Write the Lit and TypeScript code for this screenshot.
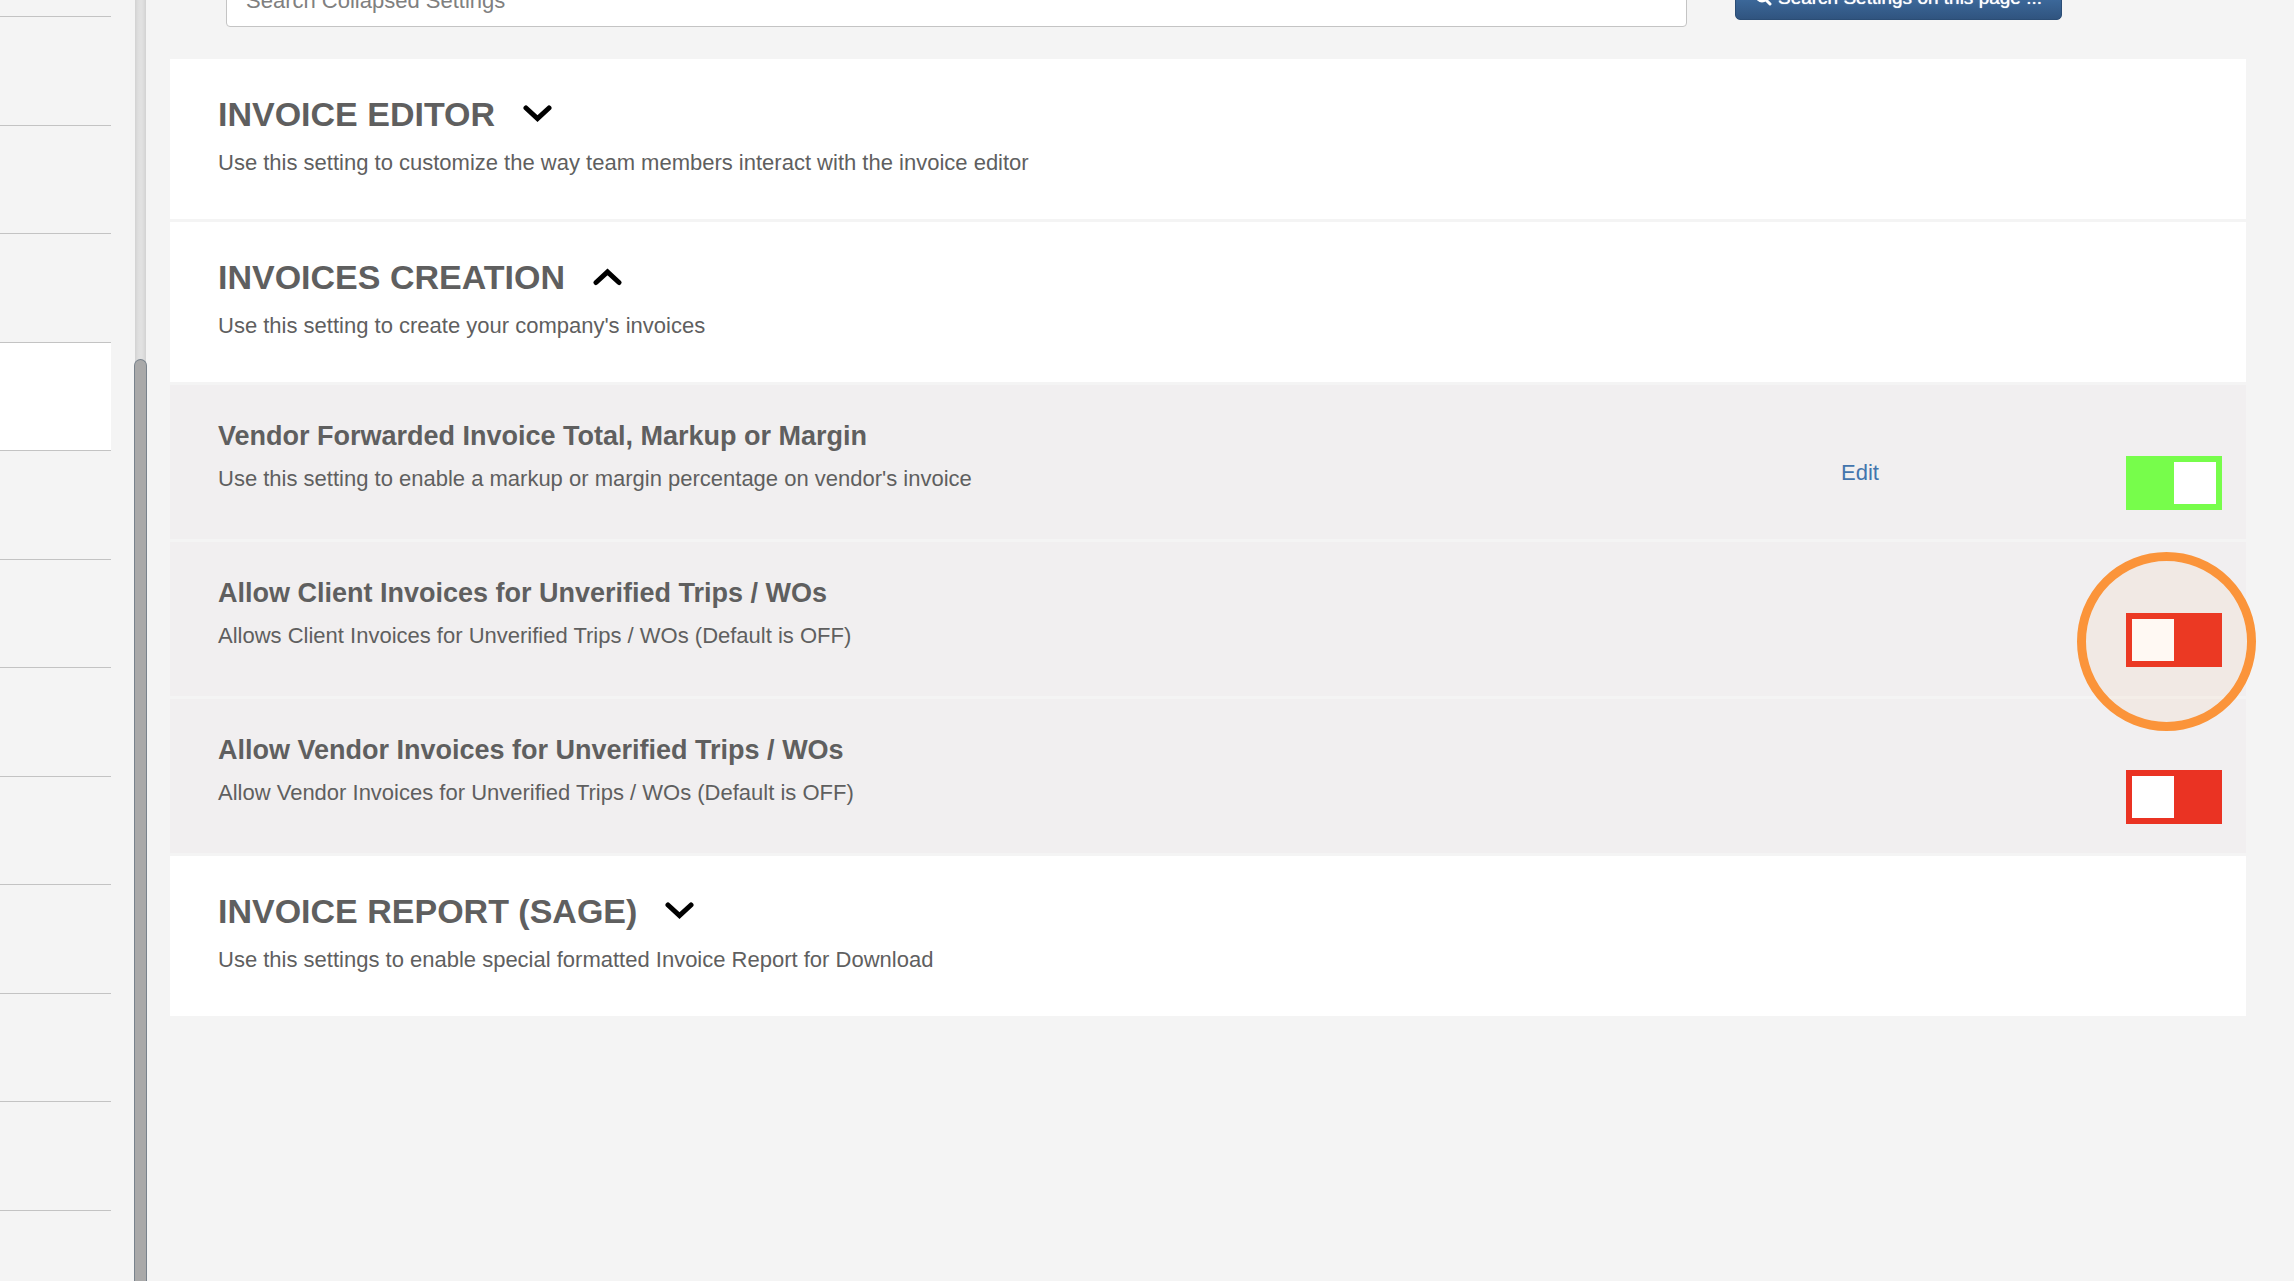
import { LitElement, html, css, svg, nothing } from "lit";
import { customElement, property, state } from "lit/decorators.js";
import { classMap } from "lit/directives/class-map.js";

interface Setting {
  id: string;
  title: string;
  description: string;
  enabled: boolean;
  editable?: boolean;
  highlighted?: boolean;
}

interface Section {
  id: string;
  title: string;
  description: string;
  open: boolean;
  settings: Setting[];
}

const SECTIONS: Section[] = [
  {
    id: "editor",
    title: "INVOICE EDITOR",
    description: "Use this setting to customize the way team members interact with the invoice editor",
    open: false,
    settings: [],
  },
  {
    id: "creation",
    title: "INVOICES CREATION",
    description: "Use this setting to create your company's invoices",
    open: true,
    settings: [
      {
        id: "markup",
        title: "Vendor Forwarded Invoice Total, Markup or Margin",
        description: "Use this setting to enable a markup or margin percentage on vendor's invoice",
        enabled: true,
        editable: true,
      },
      {
        id: "client-unverified",
        title: "Allow Client Invoices for Unverified Trips / WOs",
        description: "Allows Client Invoices for Unverified Trips / WOs (Default is OFF)",
        enabled: false,
        highlighted: true,
      },
      {
        id: "vendor-unverified",
        title: "Allow Vendor Invoices for Unverified Trips / WOs",
        description: "Allow Vendor Invoices for Unverified Trips / WOs (Default is OFF)",
        enabled: false,
      },
    ],
  },
  {
    id: "report",
    title: "INVOICE REPORT (SAGE)",
    description: "Use this settings to enable special formatted Invoice Report for Download",
    open: false,
    settings: [],
  },
];

@customElement("setting-row")
export class SettingRow extends LitElement {
  @property({ attribute: false }) setting!: Setting;

  static styles = css`
    :host {
      display: block;
    }
    .row {
      display: grid;
      grid-template-columns: minmax(0, 1fr) 285px 96px;
      align-items: start;
      padding: 0 24px 0 48px;
      background: #f1eff0;
    }
    .text {
      padding: 33px 0 44px;
    }
    .title {
      display: block;
      margin-bottom: 9px;
      font-size: 27px;
      line-height: 36px;
      font-weight: bold;
    }
    .description {
      margin: 0;
      font-size: 22px;
      line-height: 32px;
    }
    .action {
      margin-top: 72px;
      font-size: 22px;
      line-height: 32px;
    }
    .link {
      color: #4375ad;
      text-decoration: none;
    }
    .switch {
      position: relative;
      height: 54px;
      margin-top: 71px;
    }
    .toggle {
      appearance: none;
      display: flex;
      box-sizing: border-box;
      width: 100%;
      height: 100%;
      margin: 0;
      padding: 6px;
      background: #ea3323;
      cursor: pointer;
    }
    .toggle::before {
      content: "";
      width: 42px;
      height: 42px;
      background: #fff;
    }
    .toggle:checked {
      justify-content: flex-end;
      background: #77fd4b;
    }
    .ring {
      position: absolute;
      top: -61px;
      left: -49px;
      z-index: 1;
      box-sizing: border-box;
      width: 179px;
      height: 179px;
      border: 9px solid #fb943a;
      border-radius: 50%;
      background: rgba(251, 148, 58, 0.06);
      background-clip: padding-box;
      pointer-events: none;
    }
  `;

  render() {
    const s = this.setting;
    return html`
      <div class="row">
        <div class="text">
          <label class="title" for=${s.id}>${s.title}</label>
          <p class="description">${s.description}</p>
        </div>
        <div class="action">${s.editable ? html`<a class="link" href="#${s.id}">Edit</a>` : nothing}</div>
        <div class="switch">
          <input class="toggle" type="checkbox" role="switch" id=${s.id} .checked=${s.enabled} />
          ${s.highlighted ? html`<span class="ring"></span>` : nothing}
        </div>
      </div>
    `;
  }
}

@customElement("settings-section")
export class SettingsSection extends LitElement {
  @property({ attribute: false }) section!: Section;
  @state() private open = false;

  static styles = css`
    :host {
      display: flex;
      flex-direction: column;
      gap: 3px;
    }
    .head {
      padding: 35px 48px 40px;
      background: #fff;
    }
    .heading {
      margin: 0 0 13px;
      font-size: 34px;
      line-height: 40px;
    }
    .trigger {
      display: flex;
      align-items: center;
      gap: 28px;
      padding: 0;
      border: 0;
      background: none;
      color: inherit;
      font: inherit;
      cursor: pointer;
    }
    .chevron {
      width: 29px;
      height: 18px;
      fill: none;
      stroke: #000;
      stroke-width: 5;
      stroke-linecap: round;
    }
    .description {
      margin: 0;
      font-size: 22px;
      line-height: 32px;
    }
  `;

  willUpdate(changed: Map<string, unknown>) {
    if (changed.has("section")) this.open = this.section.open;
  }

  render() {
    const { title, description, settings } = this.section;
    return html`
      <div class="head">
        <h2 class="heading">
          <button class="trigger" type="button" aria-expanded=${this.open} @click=${() => (this.open = !this.open)}>
            ${title}
            <svg class="chevron" viewBox="0 0 29 18" aria-hidden="true">
              ${this.open
                ? svg`<path d="M3 14.5 14.5 3.8 26 14.5" />`
                : svg`<path d="M3 3 14.5 13.7 26 3" />`}
            </svg>
          </button>
        </h2>
        <p class="description">${description}</p>
      </div>
      ${this.open ? settings.map((s) => html`<setting-row .setting=${s}></setting-row>`) : nothing}
    `;
  }
}

@customElement("app-root")
export class AppRoot extends LitElement {
  private readonly menu = Array.from({ length: 12 }, (_, i) => ({ active: i === 4 }));

  static styles = css`
    :host {
      display: block;
      color: #5f5f5f;
      font-family: "Liberation Sans", Arial, sans-serif;
    }
    .shell {
      display: flex;
      height: 100vh;
      overflow: hidden;
      background: #f4f4f4;
    }
    .sidebar {
      flex: none;
      width: 111px;
      margin-right: 23px;
    }
    .menu {
      margin: -92px 0 0;
      padding: 0;
      list-style: none;
    }
    .item {
      box-sizing: border-box;
      height: 109px;
      border-bottom: 1px solid #c3c3c3;
    }
    .item:nth-child(odd) {
      height: 108px;
    }
    .item:first-child {
      height: 109px;
    }
    .active {
      background: #fff;
    }
    .scrollbar {
      display: flex;
      flex: none;
      box-sizing: border-box;
      width: 13px;
      padding-top: 359px;
      background: linear-gradient(90deg, transparent 1px, #d2d2d2 1px, #dedede 4px, #e2e2e2 7px, #dedede 9px, #d2d2d2 12px, transparent 12px);
    }
    .thumb {
      flex: 1;
      border: 1px solid #78828c;
      border-bottom: 0;
      border-radius: 7px 7px 0 0;
      background: #a9a9a9;
    }
    .content {
      flex: 1;
      min-width: 0;
      padding: 0 48px 0 23px;
    }
    .search {
      display: flex;
      align-items: flex-start;
      gap: 48px;
      margin: -27px 184px 32px 56px;
    }
    .query {
      flex: 1;
      box-sizing: border-box;
      min-width: 0;
      height: 54px;
      padding: 2px 19px 0;
      border: 1px solid #c4c4c4;
      border-radius: 4px;
      background: #fff;
      color: inherit;
      font: inherit;
      font-size: 22px;
    }
    .query::placeholder {
      color: #808080;
      opacity: 1;
    }
    .submit {
      display: flex;
      align-items: center;
      justify-content: center;
      gap: 6px;
      box-sizing: border-box;
      width: 327px;
      height: 47px;
      padding: 2px 0 0;
      border: 1px solid #2b4d75;
      border-radius: 5px;
      background: linear-gradient(#4b82bd, #30547f);
      color: #fff;
      font: inherit;
      font-size: 19px;
      text-shadow: 0 0 1px #fff;
      cursor: pointer;
    }
    .glass {
      width: 17px;
      height: 17px;
      fill: none;
      stroke: #fff;
      stroke-width: 3;
      stroke-linecap: round;
    }
    .sections {
      display: flex;
      flex-direction: column;
      gap: 3px;
    }
  `;

  render() {
    return html`
      <div class="shell">
        <nav class="sidebar" aria-label="Settings">
          <ul class="menu">
            ${this.menu.map((m) => html`<li class=${classMap({ item: true, active: m.active })}></li>`)}
          </ul>
        </nav>
        <div class="scrollbar"><div class="thumb"></div></div>
        <main class="content">
          <form class="search" @submit=${(e: Event) => e.preventDefault()}>
            <input class="query" type="text" aria-label="Search Collapsed Settings" placeholder="Search Collapsed Settings" />
            <button class="submit" type="submit">
              <svg class="glass" viewBox="0 0 17 17" aria-hidden="true">
                <circle cx="7" cy="7" r="5" />
                <path d="M11 11 15 15" />
              </svg>
              Search Settings on this page ...
            </button>
          </form>
          <div class="sections">
            ${SECTIONS.map((s) => html`<settings-section .section=${s}></settings-section>`)}
          </div>
        </main>
      </div>
    `;
  }
}
